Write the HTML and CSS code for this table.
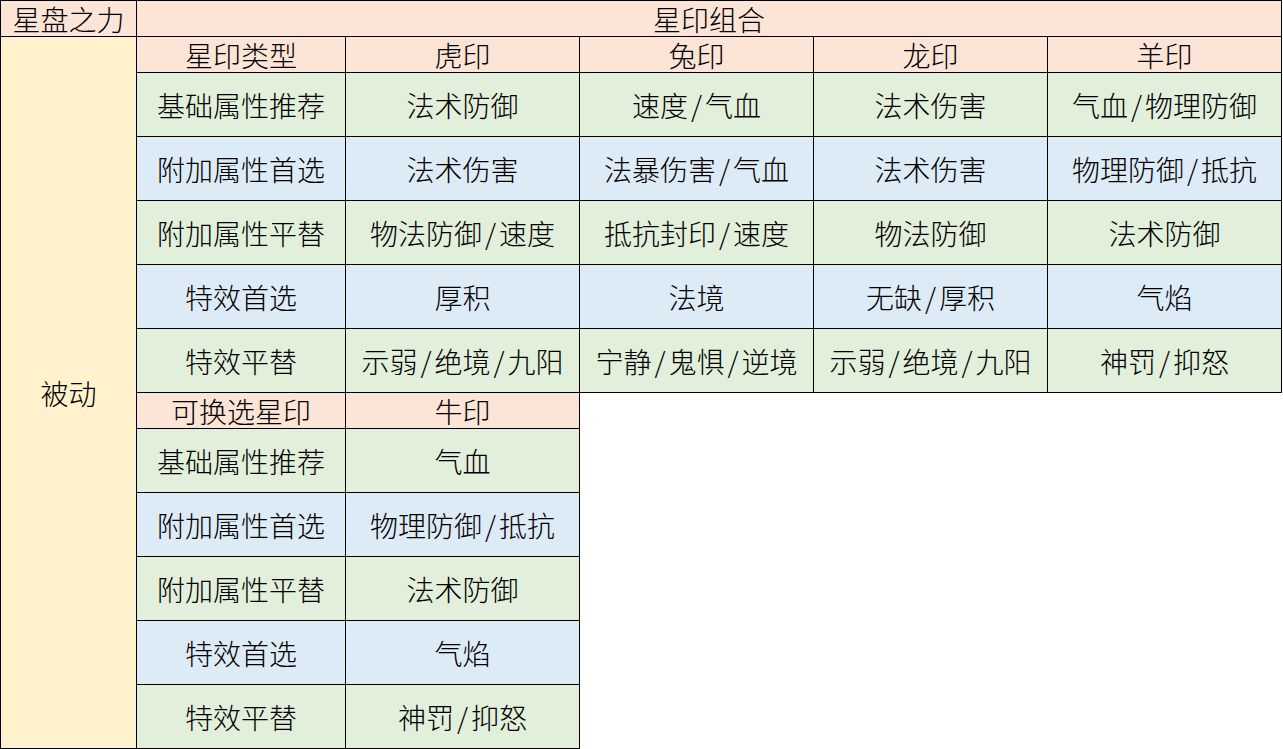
FILE: index.html
```html
<!DOCTYPE html>
<html lang="zh">
<head>
<meta charset="utf-8">
<title>星盘之力</title>
<link rel="stylesheet" href="styles.css">
</head>
<body>
<div class="sheet">
  <div class="c hd">星盘之力</div>
  <div class="c hd span5">星印组合</div>
  <div class="c side">被动</div>

  <div class="c hd">星印类型</div>
  <div class="c hd">虎印</div>
  <div class="c hd">兔印</div>
  <div class="c hd">龙印</div>
  <div class="c hd">羊印</div>

  <div class="c g">基础属性推荐</div>
  <div class="c g">法术防御</div>
  <div class="c g">速度<span class="sl">/</span>气血</div>
  <div class="c g">法术伤害</div>
  <div class="c g">气血<span class="sl">/</span>物理防御</div>

  <div class="c b">附加属性首选</div>
  <div class="c b">法术伤害</div>
  <div class="c b">法暴伤害<span class="sl">/</span>气血</div>
  <div class="c b">法术伤害</div>
  <div class="c b">物理防御<span class="sl">/</span>抵抗</div>

  <div class="c g">附加属性平替</div>
  <div class="c g">物法防御<span class="sl">/</span>速度</div>
  <div class="c g">抵抗封印<span class="sl">/</span>速度</div>
  <div class="c g">物法防御</div>
  <div class="c g">法术防御</div>

  <div class="c b">特效首选</div>
  <div class="c b">厚积</div>
  <div class="c b">法境</div>
  <div class="c b">无缺<span class="sl">/</span>厚积</div>
  <div class="c b">气焰</div>

  <div class="c g">特效平替</div>
  <div class="c g">示弱<span class="sl">/</span>绝境<span class="sl">/</span>九阳</div>
  <div class="c g">宁静<span class="sl">/</span>鬼惧<span class="sl">/</span>逆境</div>
  <div class="c g">示弱<span class="sl">/</span>绝境<span class="sl">/</span>九阳</div>
  <div class="c g">神罚<span class="sl">/</span>抑怒</div>

  <div class="c hd first2">可换选星印</div>
  <div class="c hd">牛印</div>

  <div class="c g first2">基础属性推荐</div>
  <div class="c g">气血</div>

  <div class="c b first2">附加属性首选</div>
  <div class="c b">物理防御<span class="sl">/</span>抵抗</div>

  <div class="c g first2">附加属性平替</div>
  <div class="c g">法术防御</div>

  <div class="c b first2">特效首选</div>
  <div class="c b">气焰</div>

  <div class="c g first2">特效平替</div>
  <div class="c g">神罚<span class="sl">/</span>抑怒</div>
</div>
</body>
</html>
```

FILE: styles.css
```css
html, body {
  margin: 0;
  padding: 0;
  background: #ffffff;
}

body {
  font-family: "Noto Sans CJK SC", "Noto Sans", sans-serif;
  font-weight: 300;
  color: #000000;
}

.sheet {
  display: grid;
  grid-template-columns: 136px 209px 234px 234px 234px 234px;
  grid-template-rows: 36px 36px 64px 64px 64px 64px 64px 36px 64px 64px 64px 64px 64px;
  width: max-content;
  border-top: 1px solid #000;
  border-left: 1px solid #000;
}

.c {
  box-sizing: border-box;
  border-right: 1px solid #000;
  border-bottom: 1px solid #000;
  display: flex;
  align-items: center;
  justify-content: center;
  font-size: 28px;
  line-height: 1;
  white-space: nowrap;
}

.hd {
  background: #fce4d6;
  align-items: flex-end;
  padding-bottom: 3px;
}

.span5 {
  grid-column: 2 / span 5;
}

.side {
  background: #fff2cc;
  grid-column: 1;
  grid-row: 2 / span 12;
}

.first2 {
  grid-column: 2;
}

.g {
  background: #e2efda;
}

.b {
  background: #ddebf7;
}

.sl {
  margin: 0 3px;
}
```
